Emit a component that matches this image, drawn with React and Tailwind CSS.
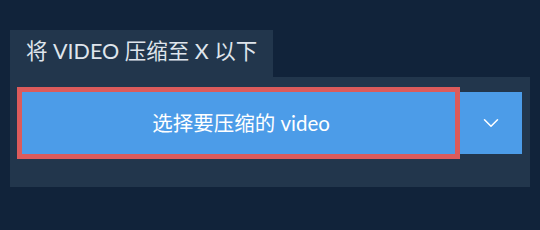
import { ChevronDown } from "lucide-react";

export default function App() {
  return (
    <div
      className="h-[230px] w-[540px] bg-[#11233a] pl-[10px] pt-[30px]"
      style={{ fontFamily: 'Lato, "Noto Sans CJK SC", sans-serif' }}
    >
      <div className="flex h-[47px] w-[263px] items-center bg-[#22364c] pl-4 pb-1 text-[21.5px] text-[#dfe5ec]">
        将 VIDEO 压缩至 X 以下
      </div>
      <div className="flex h-[110px] w-[520px] items-start bg-[#22364c] pl-3 pt-[15px]">
        <button className="flex h-[62px] w-[433px] items-center justify-center bg-[#4c9ce8] pl-[5px] text-[20.5px] text-white outline-[5px] outline-[#dc5b5b] outline-solid">
          选择要压缩的 video
        </button>
        <button className="ml-[5px] flex h-[62px] w-[62px] items-center justify-center bg-[#4c9ce8] text-white">
          <ChevronDown size={26} strokeWidth={1.4} />
        </button>
      </div>
    </div>
  );
}
